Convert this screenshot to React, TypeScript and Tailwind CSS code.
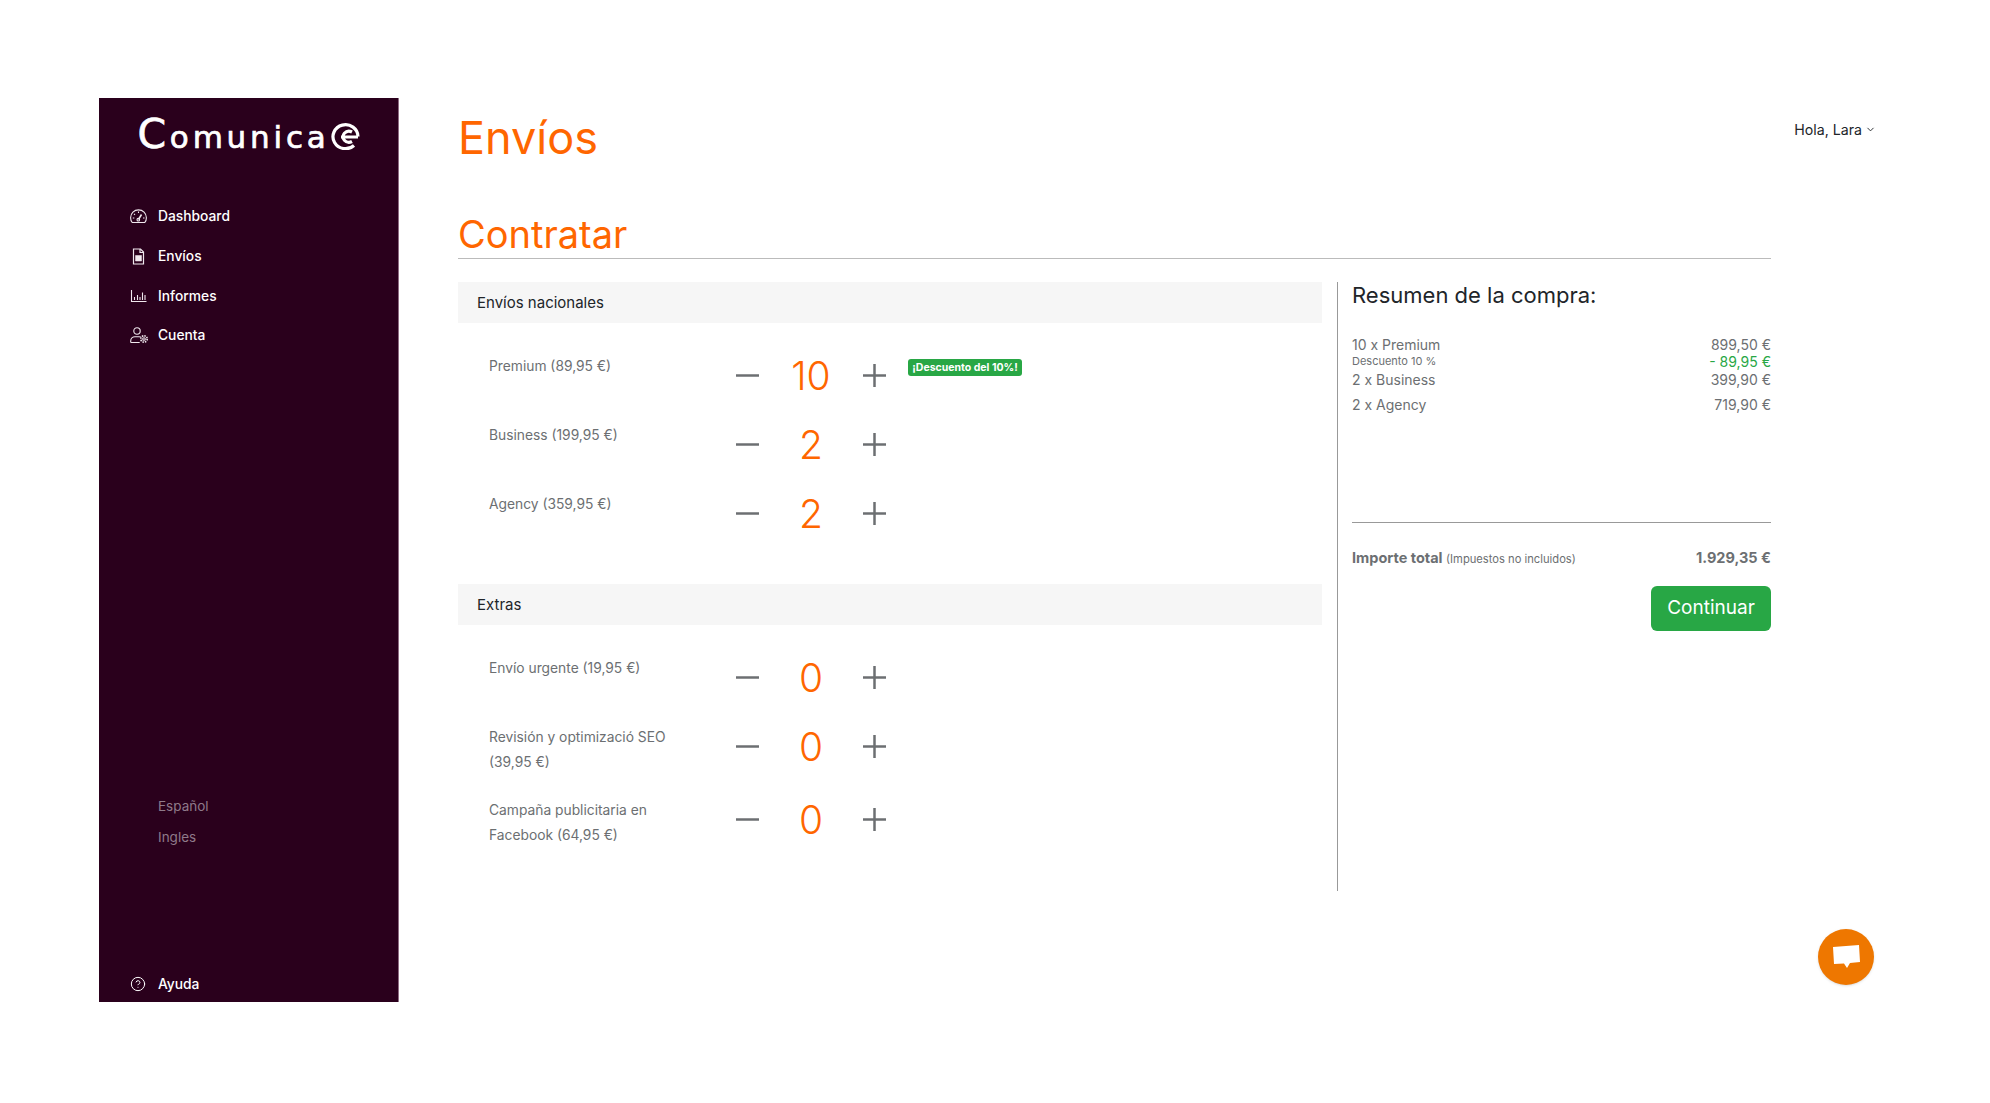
import {CircleHelp, ChevronDown} from 'lucide-react'

const sans = "font-['Inter',sans-serif]"

type Item = {
  label: string[]
  qty: number
  badge?: string
}

const nacionales: Item[] = [
  {label: ['Premium (89,95 €)'], qty: 10, badge: '¡Descuento del 10%!'},
  {label: ['Business (199,95 €)'], qty: 2},
  {label: ['Agency (359,95 €)'], qty: 2},
]

const extras: Item[] = [
  {label: ['Envío urgente (19,95 €)'], qty: 0},
  {label: ['Revisión y optimizació SEO', '(39,95 €)'], qty: 0},
  {label: ['Campaña publicitaria en', 'Facebook (64,95 €)'], qty: 0},
]

function GaugeIcon() {
  return (
    <svg width="17" height="17" viewBox="0 0 17 17" fill="none" stroke="currentColor" strokeWidth="1.100">
      <path d="M2.200 14.500C1.100 13.200.6 11.500.6 9.800a7.900 7.900 0 0 1 15.800 0c0 1.700-.5 3.400-1.600 4.700z"/>
      <path d="M8.500 11.500 11.500 6.500" strokeWidth="1.500"/>
      <circle cx="8.300" cy="11.700" r="1.300"/>
      <path d="M8.500 3.500v1.500M4 5.800l1 1M2.800 10h1.500M13 10h1.500"/>
    </svg>
  )
}

function FileIcon() {
  return (
    <svg width="17" height="17" viewBox="0 0 17 17" fill="none" stroke="currentColor" strokeWidth="1.200">
      <path d="M3.500 1h7l3 3v12h-10z"/>
      <path d="M10 1v3.500h3.500"/>
      <path d="M5.500 7.500h6v5.500h-6z" fill="currentColor" strokeWidth=".5"/>
    </svg>
  )
}

function BarsIcon() {
  return (
    <svg width="17" height="17" viewBox="0 0 17 17" fill="none" stroke="currentColor" strokeWidth="1.100">
      <path d="M1.500 3v11.500h15"/>
      <path d="M4.500 13v-3M7.500 13V8M10 13V10M12.500 13V5.500M15 13V8"/>
    </svg>
  )
}

function UserGearIcon() {
  return (
    <svg width="19" height="17" viewBox="0 0 19 17" fill="none" stroke="currentColor" strokeWidth="1.100">
      <circle cx="7" cy="4" r="3.200"/>
      <path d="M.7 15.500v-1.500c0-2.500 2-4.300 4.300-4.300h4c.7 0 1.300.2 1.800.4M.7 15.500h9"/>
      <circle cx="14" cy="12" r="1.300"/>
      <circle cx="14" cy="12" r="3.200" strokeDasharray="1.500 1" strokeWidth="1.600"/>
    </svg>
  )
}

function StepIcon({plus}: { plus?: boolean }) {
  return (
    <svg width="23" height="23" viewBox="0 0 23 23" fill="none" stroke="#6c6f72" strokeWidth="2.500">
      <path d="M0 11.500h23"/>
      {plus && <path d="M11.500 0v23"/>}
    </svg>
  )
}

function Logo() {
  return (
    <div className="flex items-center justify-center h-[38px] mt-[8px] text-white">
      <span className="font-['DejaVu_Sans',sans-serif] text-[31px] leading-[38px] tracking-[3.800px] [-webkit-text-stroke:0.7px_white]">
        <span className="text-[41px] leading-[38px]">C</span>omunica
      </span>
      <svg width="29" height="27" viewBox="0 0 29 27" fill="none" stroke="currentColor" strokeWidth="3.200" className="ml-[1px] mt-[3px]">
        <path d="M27 13.500a12.500 12 0 1 0-4 9"/>
        <path d="M21 18.500a6 5.500 0 1 1 0-9.500M10 14h17"/>
      </svg>
    </div>
  )
}

function NavRow({icon, label}: { icon: React.ReactNode, label: string }) {
  return (
    <div className="flex items-center h-[39.6px]">
      <div className="w-[28px] flex items-center text-[#f0e8ee]">{icon}</div>
      <span className="text-[13.800px] font-medium text-white">{label}</span>
    </div>
  )
}

function Sidebar() {
  return (
    <aside className={`${sans} w-[300px] h-[904px] shrink-0 bg-[#2a001c] border-r border-[#8c6b82] flex flex-col pt-[10px]`}>
      <Logo/>
      <nav className="mt-[43px] pl-[31px]">
        <NavRow icon={<GaugeIcon/>} label="Dashboard"/>
        <NavRow icon={<FileIcon/>} label="Envíos"/>
        <NavRow icon={<BarsIcon/>} label="Informes"/>
        <NavRow icon={<UserGearIcon/>} label="Cuenta"/>
      </nav>
      <div className="mt-auto pl-[59px] text-[13.500px] text-[#8f7a8a]">
        <div className="h-[31px] flex items-center">Español</div>
        <div className="h-[31px] flex items-center">Ingles</div>
      </div>
      <div className="mt-[113px] pl-[31px] h-[36px] flex items-center">
        <CircleHelp className="w-[16px] h-[16px] text-white mr-[12px]" strokeWidth={1.500}/>
        <span className="text-[13.800px] font-medium text-white">Ayuda</span>
      </div>
    </aside>
  )
}

function ProductRow({item}: { item: Item }) {
  return (
    <div className="flex pl-[31px]">
      <div className="w-[247px] pt-[13px] pb-[11px] text-[13.800px] leading-[24.500px] text-[#6c6f72]">
        {item.label.map((line) => <div key={line}>{line}</div>)}
      </div>
      <div className="h-[69px] flex items-center">
        <StepIcon/>
        <span className="w-[104px] text-center text-[39px] leading-none font-light text-[#ff6600]">{item.qty}</span>
        <StepIcon plus/>
      </div>
      {item.badge && (
        <span className="ml-[22px] mt-[18px] h-[17px] w-[114px] text-center rounded-[3px] bg-[#28a745] text-white text-[10.500px] leading-[17px] font-bold whitespace-nowrap">
          {item.badge}
        </span>
      )}
    </div>
  )
}

function Section({title, items, className}: { title: string, items: Item[], className?: string }) {
  return (
    <section className={className}>
      <div className="h-[41px] pl-[19px] pt-[1px] flex items-center bg-[#f6f6f6] text-[15px] text-[#212529]">{title}</div>
      <div className="mt-[18px]">
        {items.map((item) => <ProductRow key={item.label[0]} item={item}/>)}
      </div>
    </section>
  )
}

function SummaryRow({label, value, className}: { label: string, value: string, className: string }) {
  return (
    <div className={`flex items-center justify-between ${className}`}>
      <span>{label}</span>
      <span>{value}</span>
    </div>
  )
}

function Summary() {
  return (
    <div className="w-[434px] ml-[15px] pl-[14px] border-l border-[#999] h-[609px] text-[#6c6f72]">
      <h2 className="text-[22px] leading-[26px] text-[#212529]">Resumen de la compra:</h2>
      <div className="mt-[27px] text-[14px]">
        <SummaryRow label="10 x Premium" value="899,50 €" className="h-[18px]"/>
        <div className="flex items-center justify-between h-[17px]">
          <span className="text-[11px]">Descuento 10 %</span>
          <span className="text-[#28a745]">- 89,95 €</span>
        </div>
        <SummaryRow label="2 x Business" value="399,90 €" className="h-[18px]"/>
        <SummaryRow label="2 x Agency" value="719,90 €" className="h-[18px] mt-[7px]"/>
      </div>
      <div className="mt-[109px] border-t border-[#999]"/>
      <div className="mt-[24px] flex items-baseline justify-between text-[14.500px] font-bold">
        <span>Importe total <span className="text-[11.200px] font-normal">(Impuestos no incluidos)</span></span>
        <span>1.929,35 €</span>
      </div>
      <div className="mt-[17px] flex justify-end">
        <button type="button" className="w-[120px] h-[45px] rounded-[6px] bg-[#28a745] text-white text-[19px]">Continuar</button>
      </div>
    </div>
  )
}

export default function App() {
  return (
    <div className={`${sans} relative min-h-[1103px] bg-white pt-[98px] pl-[99px] flex`}>
      <Sidebar/>
      <main className="ml-[59px] w-[1418px]">
        <div className="flex items-start justify-between h-[80px]">
          <h1 className="text-[45px] leading-[80px] font-normal text-[#ff6600]">Envíos</h1>
          <div className="mt-[21px] flex items-center text-[14.200px] text-[#212529]">
            Hola, Lara
            <ChevronDown className="w-[11px] h-[11px] ml-[3px]" strokeWidth={2}/>
          </div>
        </div>
        <div className="w-[1313px]">
          <h2 className="mt-[12px] h-[69px] pb-[4px] flex items-end border-b border-[#bbb] text-[38px] leading-[39px] font-normal text-[#ff6600]">Contratar</h2>
          <div className="mt-[23px] flex">
            <div className="w-[864px] shrink-0">
              <Section title="Envíos nacionales" items={nacionales}/>
              <Section title="Extras" items={extras} className="mt-[36px]"/>
            </div>
            <Summary/>
          </div>
        </div>
      </main>
      <button type="button" className="absolute left-[1818px] top-[929px] w-[56px] h-[56px] rounded-full bg-[#ee7700] flex items-center justify-center shadow-sm">
        <svg width="28" height="26" viewBox="0 0 28 26" fill="white">
          <path d="M1 3 27 1l1 17-10 1-3 5-3-4.500-10 .5z"/>
        </svg>
      </button>
    </div>
  )
}
